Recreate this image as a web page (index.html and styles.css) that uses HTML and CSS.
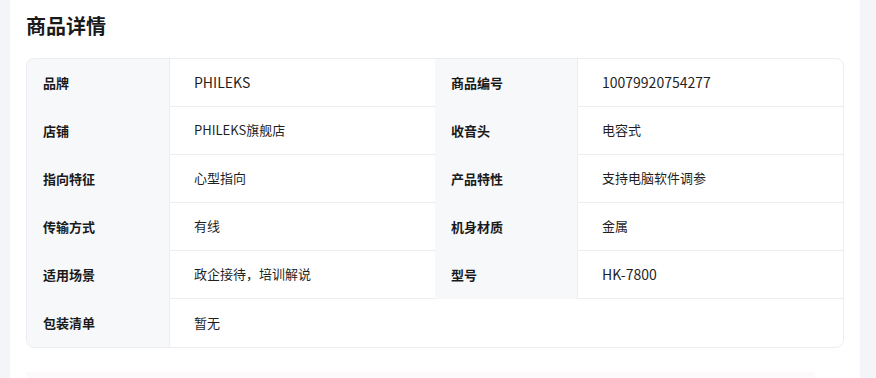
FILE: index.html
```html
<!DOCTYPE html>
<html lang="zh">
<head>
<meta charset="utf-8">
<link rel="stylesheet" href="styles.css">
</head>
<body>
<div class="page">
  <div class="panel">
    <h2 class="title">商品详情</h2>
    <div class="desc">
      <div class="lbl">品牌</div><div class="val num">PHILEKS</div>
      <div class="lbl r">商品编号</div><div class="val num">10079920754277</div>
      <div class="lbl">店铺</div><div class="val">PHILEKS旗舰店</div>
      <div class="lbl r">收音头</div><div class="val">电容式</div>
      <div class="lbl">指向特征</div><div class="val">心型指向</div>
      <div class="lbl r">产品特性</div><div class="val">支持电脑软件调参</div>
      <div class="lbl">传输方式</div><div class="val">有线</div>
      <div class="lbl r">机身材质</div><div class="val">金属</div>
      <div class="lbl">适用场景</div><div class="val">政企接待，培训解说</div>
      <div class="lbl r">型号</div><div class="val num">HK-7800</div>
      <div class="lbl">包装清单</div><div class="val span last">暂无</div>
    </div>
    <div class="next"></div>
  </div>
</div>
</body>
</html>
```
FILE: styles.css
```css
* { box-sizing: border-box; }
html, body { margin: 0; padding: 0; }
body {
  background: #f4f5f9;
  font-family: "Noto Sans CJK SC", "Noto Sans", sans-serif;
  color: #1f1f1f;
  height: 378px;
  overflow: hidden;
}
.page { padding: 0 16px 0 10px; }
.panel {
  background: #fff;
  padding: 10px 16px 0 16px;
  height: 378px;
}
.title {
  margin: 0;
  font-size: 20px;
  font-weight: 700;
  line-height: 32px;
  color: #1a1a1a;
}
.desc {
  margin-top: 16px;
  display: grid;
  grid-template-columns: 142px 266px 142px 1fr;
  border: 1px solid #ebedf0;
  border-radius: 8px;
  overflow: hidden;
}
.lbl {
  background: #f7f8fa;
  height: 48px;
  padding: 0 0 2px 16px;
  display: flex;
  align-items: center;
  font-size: 13px;
  font-weight: 700;
  color: #1a1a1a;
}
.val {
  height: 48px;
  padding: 0 0 2px 24px;
  display: flex;
  align-items: center;
  font-size: 13px;
  border-left: 1px solid #ebedf0;
  border-bottom: 1px solid #ebedf0;
  color: #1f1f1f;
}
.val.num { font-size: 14px; }
.val.span { grid-column: 2 / 5; }
.val.last { border-bottom: none; }
.next {
  margin-top: 24px;
  height: 20px;
  margin-right: 29px;
  background: #fcfafa;
}
```
